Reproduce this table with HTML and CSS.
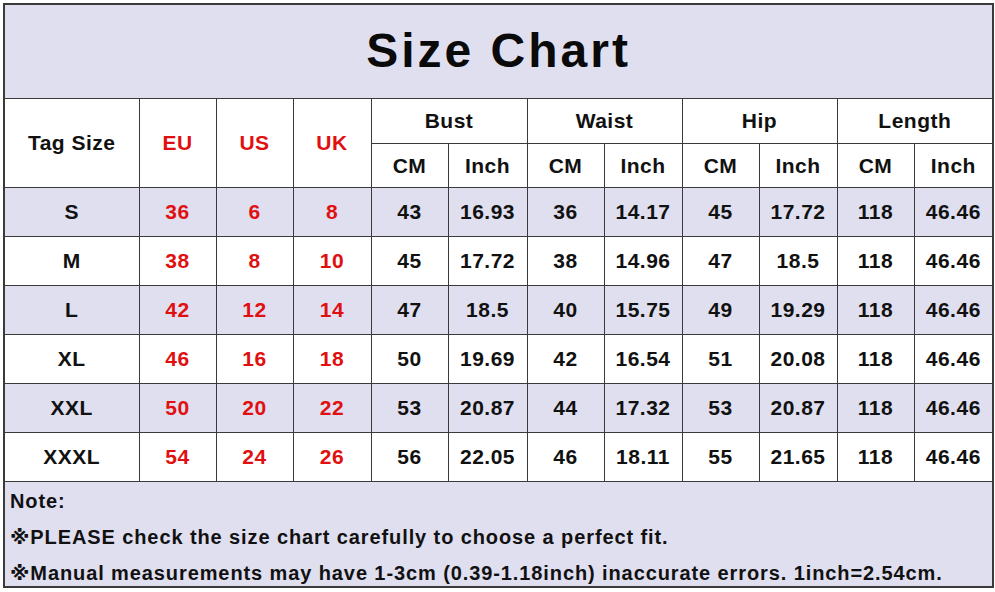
FILE: index.html
```html
<!DOCTYPE html>
<html>
<head>
<meta charset="utf-8">
<link rel="stylesheet" href="styles.css">
</head>
<body>
<table class="chart">
  <colgroup>
    <col class="c-tag"><col class="c-n"><col class="c-n"><col class="c-w"><col class="c-n"><col class="c-w2"><col class="c-n"><col class="c-w"><col class="c-n"><col class="c-w"><col class="c-n"><col class="c-w2">
  </colgroup>
  <tr class="title-row"><td colspan="12" class="title">Size Chart</td></tr>
  <tr class="head1">
    <td rowspan="2">Tag Size</td>
    <td rowspan="2" class="red">EU</td>
    <td rowspan="2" class="red">US</td>
    <td rowspan="2" class="red">UK</td>
    <td colspan="2">Bust</td>
    <td colspan="2">Waist</td>
    <td colspan="2">Hip</td>
    <td colspan="2">Length</td>
  </tr>
  <tr class="head2">
    <td>CM</td><td>Inch</td><td>CM</td><td>Inch</td><td>CM</td><td>Inch</td><td>CM</td><td>Inch</td>
  </tr>
  <tr class="row shade"><td>S</td><td class="red">36</td><td class="red">6</td><td class="red">8</td><td>43</td><td>16.93</td><td>36</td><td>14.17</td><td>45</td><td>17.72</td><td>118</td><td>46.46</td></tr>
  <tr class="row"><td>M</td><td class="red">38</td><td class="red">8</td><td class="red">10</td><td>45</td><td>17.72</td><td>38</td><td>14.96</td><td>47</td><td>18.5</td><td>118</td><td>46.46</td></tr>
  <tr class="row shade"><td>L</td><td class="red">42</td><td class="red">12</td><td class="red">14</td><td>47</td><td>18.5</td><td>40</td><td>15.75</td><td>49</td><td>19.29</td><td>118</td><td>46.46</td></tr>
  <tr class="row"><td>XL</td><td class="red">46</td><td class="red">16</td><td class="red">18</td><td>50</td><td>19.69</td><td>42</td><td>16.54</td><td>51</td><td>20.08</td><td>118</td><td>46.46</td></tr>
  <tr class="row shade"><td>XXL</td><td class="red">50</td><td class="red">20</td><td class="red">22</td><td>53</td><td>20.87</td><td>44</td><td>17.32</td><td>53</td><td>20.87</td><td>118</td><td>46.46</td></tr>
  <tr class="row"><td>XXXL</td><td class="red">54</td><td class="red">24</td><td class="red">26</td><td>56</td><td>22.05</td><td>46</td><td>18.11</td><td>55</td><td>21.65</td><td>118</td><td>46.46</td></tr>
  <tr class="notes-row">
    <td colspan="12" class="notes">
      <div class="note-line">Note:</div>
      <div class="note-line">※PLEASE check the size chart carefully to choose a perfect fit.</div>
      <div class="note-line">※Manual measurements may have 1-3cm (0.39-1.18inch) inaccurate errors. 1inch=2.54cm.</div>
    </td>
  </tr>
</table>
</body>
</html>
```
FILE: styles.css
```css
html, body {
  margin: 0;
  padding: 0;
  background: #ffffff;
}
body {
  padding: 3px 0 0 3px;
  font-family: "Liberation Sans", Arial, "DejaVu Sans", "Noto Sans CJK JP", sans-serif;
  font-weight: bold;
  color: #111111;
}
.chart {
  border-collapse: collapse;
  table-layout: fixed;
  width: 989px;
  border: 2px solid #3a3a3a;
}
.c-tag { width: 135px; }
.c-n { width: 77px; }
.c-w { width: 78px; }
.c-w2 { width: 79px; }
.chart td {
  border: 1.5px solid #3a3a3a;
  text-align: center;
  vertical-align: middle;
  font-size: 21px;
  padding: 0;
  letter-spacing: 0.5px;
}
.title-row td {
  height: 91px;
  background: #e0dff0;
  font-size: 48px;
  letter-spacing: 3px;
  padding: 0 0 2px 0;
  color: #0a0a0a;
}
.head1 td { height: 44px; }
.head2 td { height: 43px; }
.row td { height: 48px; }
.shade td { background: #e0dff0; }
.red { color: #e01010; }
.notes-row td.notes {
  background: #e0dff0;
  text-align: left;
  vertical-align: top;
  padding: 6px 0 0 5px;
  height: 97px;
  font-size: 20px;
  letter-spacing: 0.9px;
}
.note-line {
  height: 36px;
  line-height: 26px;
}
.note-line:last-child {
  height: 26px;
}
```
